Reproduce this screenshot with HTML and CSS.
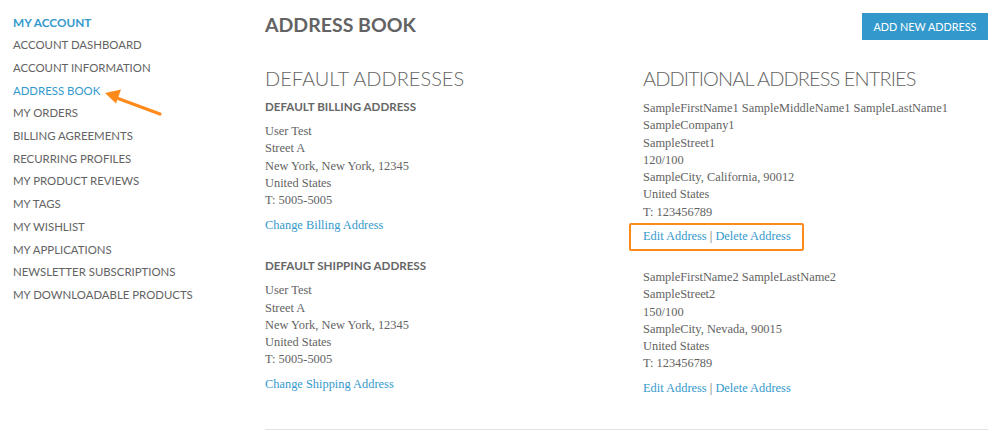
FILE: index.html
```html
<!DOCTYPE html>
<html>
<head>
<meta charset="utf-8">
<link rel="stylesheet" href="styles.css">
</head>
<body>
<div class="page">
  <aside class="sidebar">
    <div class="side-title">MY ACCOUNT</div>
    <ul class="side-nav">
      <li>ACCOUNT DASHBOARD</li>
      <li>ACCOUNT INFORMATION</li>
      <li class="current">ADDRESS BOOK</li>
      <li>MY ORDERS</li>
      <li>BILLING AGREEMENTS</li>
      <li>RECURRING PROFILES</li>
      <li>MY PRODUCT REVIEWS</li>
      <li>MY TAGS</li>
      <li>MY WISHLIST</li>
      <li>MY APPLICATIONS</li>
      <li>NEWSLETTER SUBSCRIPTIONS</li>
      <li>MY DOWNLOADABLE PRODUCTS</li>
    </ul>
    <svg class="arrow" width="70" height="34" viewBox="0 0 70 34">
      <line x1="60" y1="29" x2="14" y2="12" stroke="#ff8a1c" stroke-width="3.2" stroke-linecap="round"/>
      <polygon points="5,8 21,4.5 16,18.5" fill="#ff8a1c"/>
    </svg>
  </aside>
  <main class="main">
    <div class="header">
      <h1 class="title">ADDRESS BOOK</h1>
      <button class="btn">ADD NEW ADDRESS</button>
    </div>
    <div class="columns">
      <section class="col">
        <h2 class="sec-title">DEFAULT ADDRESSES</h2>
        <h3 class="sub-title">DEFAULT BILLING ADDRESS</h3>
        <address class="addr">User Test<br>Street A<br>New York, New York, 12345<br>United States<br>T: 5005-5005</address>
        <p class="links"><a href="#">Change Billing Address</a></p>
        <h3 class="sub-title sub-gap">DEFAULT SHIPPING ADDRESS</h3>
        <address class="addr">User Test<br>Street A<br>New York, New York, 12345<br>United States<br>T: 5005-5005</address>
        <p class="links"><a href="#">Change Shipping Address</a></p>
      </section>
      <section class="col">
        <h2 class="sec-title sec-right">ADDITIONAL ADDRESS ENTRIES</h2>
        <address class="addr addr-first">SampleFirstName1 SampleMiddleName1 SampleLastName1<br>SampleCompany1<br>SampleStreet1<br>120/100<br>SampleCity, California, 90012<br>United States<br>T: 123456789</address>
        <p class="links highlight"><a href="#">Edit Address</a> <span class="sep">|</span> <a href="#">Delete Address</a></p>
        <address class="addr addr-next">SampleFirstName2 SampleLastName2<br>SampleStreet2<br>150/100<br>SampleCity, Nevada, 90015<br>United States<br>T: 123456789</address>
        <p class="links"><a href="#">Edit Address</a> <span class="sep">|</span> <a href="#">Delete Address</a></p>
      </section>
    </div>
    <div class="rule"></div>
  </main>
</div>
</body>
</html>
```
FILE: styles.css
```css
* { box-sizing: border-box; }
html, body { margin: 0; padding: 0; background: #fff; }
body { font-family: "Lato", "Open Sans", sans-serif; color: #636363; }

.page {
  display: flex;
  width: 1000px;
  height: 433px;
  overflow: hidden;
}

.sidebar {
  position: relative;
  width: 265px;
  padding: 11.5px 0 0 13px;
  flex: none;
}
.side-title {
  font-size: 11.8px;
  line-height: 22.7px;
  font-weight: 700;
  color: #3399cc;
}
.side-nav {
  list-style: none;
  margin: 0;
  padding: 0;
}
.side-nav li {
  font-size: 11.4px;
  line-height: 22.7px;
  color: #636363;
}
.side-nav li.current { color: #3399cc; }

.arrow {
  position: absolute;
  left: 100px;
  top: 85px;
}

.main {
  width: 723px;
  flex: none;
}

.header {
  display: flex;
  justify-content: space-between;
  align-items: flex-start;
  margin-top: 13px;
  height: 27px;
}
.title {
  margin: 0;
  font-size: 19.5px;
  line-height: 24px;
  font-weight: 700;
  color: #636363;
}
.btn {
  border: 0;
  background: #3399cc;
  color: #fff;
  font-family: inherit;
  font-size: 10.8px;
  height: 27px;
  width: 126px;
  padding: 0;
  cursor: pointer;
}

.columns {
  display: grid;
  grid-template-columns: 378px 345px;
}

.sec-title {
  margin: 26px 0 0;
  font-size: 20px;
  line-height: 24px;
  font-weight: 300;
  color: #636363;
}
.sec-right { letter-spacing: -0.9px; }
.sub-title {
  margin: 9px 0 0;
  font-size: 11.6px;
  line-height: 16px;
  font-weight: 700;
  color: #666;
}
.sub-gap { margin-top: 24.4px; }

.addr {
  margin: 8.2px 0 0;
  font-style: normal;
  font-family: "Liberation Serif", "DejaVu Serif", serif;
  font-size: 12.4px;
  line-height: 17.25px;
  color: #636363;
}
.addr-first { margin-top: 10.2px; }
.addr-next { margin-top: 23.8px; }

.links {
  position: relative;
  margin: 7.2px 0 0;
  font-family: "Liberation Serif", "DejaVu Serif", serif;
  font-size: 12.4px;
  line-height: 17.25px;
}
.links a { color: #3399cc; text-decoration: none; }
.links .sep { color: #636363; }

.highlight::after {
  content: "";
  position: absolute;
  left: -14px;
  top: -5px;
  width: 171px;
  height: 24px;
  border: 2.5px solid #ff8a1c;
  border-radius: 2px;
}

.rule {
  margin-top: 32px;
  height: 1px;
  background: #e3e3e3;
}
```
